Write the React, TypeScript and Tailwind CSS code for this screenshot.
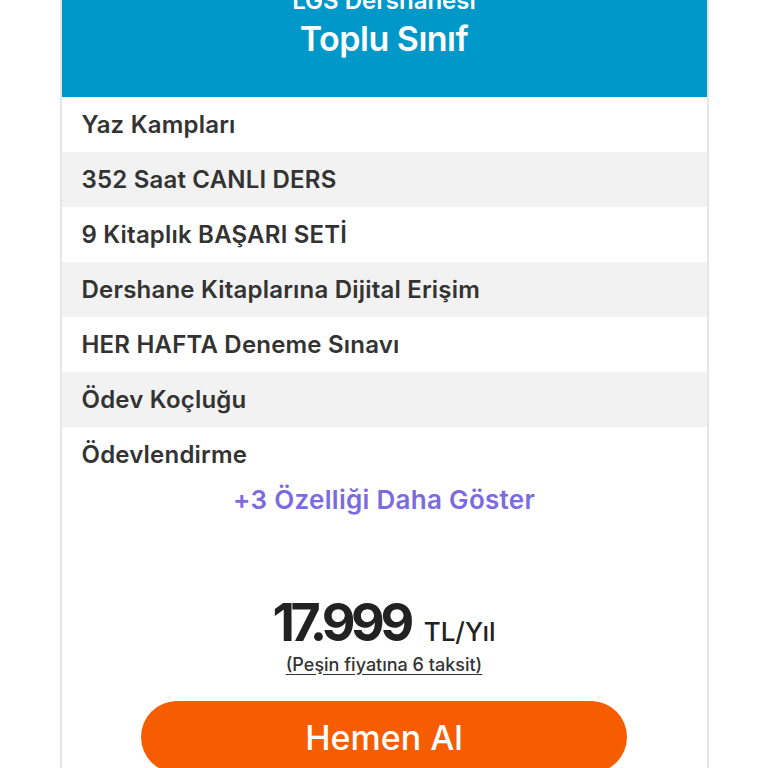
import React from 'react'

const features = [
  'Yaz Kampları',
  '352 Saat CANLI DERS',
  '9 Kitaplık BAŞARI SETİ',
  'Dershane Kitaplarına Dijital Erişim',
  'HER HAFTA Deneme Sınavı',
  'Ödev Koçluğu',
  'Ödevlendirme',
]

const App = () => {
  return (
    <div className="min-h-[768px] overflow-hidden bg-white font-['Inter',sans-serif]">
      <div className="mx-auto -mt-[30px] w-[649px] border-x-2 border-[#e6e6e6] bg-white">
        <div className="flex flex-col items-center bg-[#0098c9] pt-[15px] pb-[38px] text-white">
          <div className="text-[24px] leading-[32px] font-semibold">LGS Dershanesi</div>
          <div className="mt-[2px] text-[34px] leading-[40px] font-semibold tracking-[-0.5px]">
            Toplu Sınıf
          </div>
        </div>
        <ul>
          {features.map((item, i) => (
            <li
              key={item}
              className={
                'flex h-[55px] items-center px-[20px] text-[24px] font-semibold tracking-[0.2px] text-[#333333] ' +
                (i % 2 === 1 ? 'bg-[#f2f2f2]' : 'bg-white')
              }
            >
              {item}
            </li>
          ))}
        </ul>
        <div className="flex h-[34px] items-center justify-center text-[26px] font-semibold tracking-[0.3px] text-[#7b6ae2]">
          +3 Özelliği Daha Göster
        </div>
        <div className="mt-[79px] flex flex-col items-center">
          <div className="flex items-baseline gap-[14px] text-[#222222]">
            <span className="text-[52px] leading-[56px] font-bold tracking-[-4.5px]">17.999</span>
            <span className="text-[26px] font-medium">TL/Yıl</span>
          </div>
          <div className="mt-[0px] text-[18px] font-medium text-[#333333] underline underline-offset-[3px]">
            (Peşin fiyatına 6 taksit)
          </div>
        </div>
        <div className="flex justify-center pt-[23px] pb-[30px]">
          <button className="h-[72px] w-[486px] rounded-full bg-[#f65c00] text-[34px] font-medium text-white">
            Hemen Al
          </button>
        </div>
      </div>
    </div>
  )
}

export default App
